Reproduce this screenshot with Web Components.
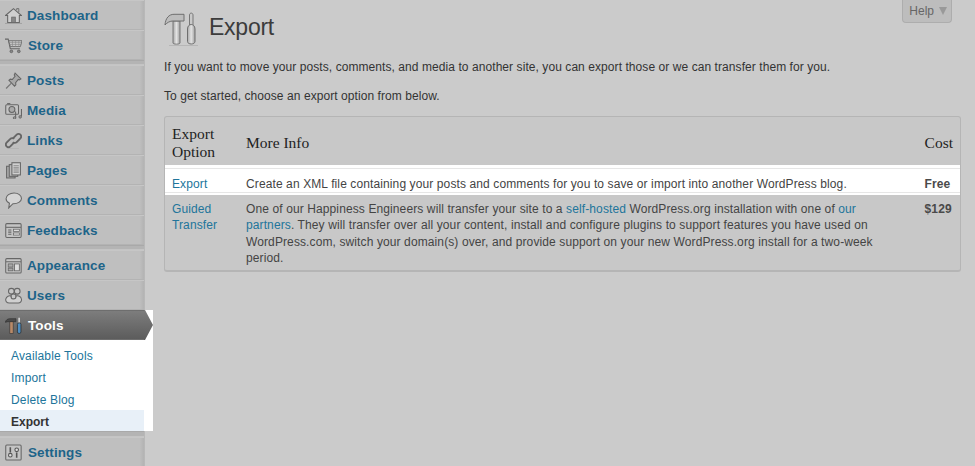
<!DOCTYPE html>
<html>
<head>
<meta charset="utf-8">
<style>
html,body{margin:0;padding:0;height:466px;overflow:hidden;background:#cbcbcb}
body{display:flex;font:12px "Liberation Sans",Arial,sans-serif;color:#333}
</style>
</head>
<body>
<admin-menu>
  <menu-item label="Dashboard"><svg viewBox="0 0 16 16"><path d="M.5 8 8 1.500 15.500 8 13.500 8v6.500h-11V8z" fill="#cfcfcf" stroke="#666"/><path d="M11 3V1.500h2V5" fill="#bbb" stroke="#666" stroke-width=".8"/><rect x="6.300" y="9.500" width="3.400" height="5" fill="#888" stroke="#666" stroke-width=".7"/><path d="M0 15.500h16" stroke="#a3a3a3"/></svg></menu-item>
  <menu-item label="Store" shift="1"><svg viewBox="0 0 16 16"><path d="M0 2h3l2 9h9" fill="none" stroke="#666"/><path d="M3.500 3.500H16l-1.500 5.500H5z" fill="#c8c8c8" stroke="#666" stroke-width=".8"/><path d="M4 5.300h11.500M4.500 7.100h10.500M7 3.500V9M10 3.500V9M13 3.500V9" stroke="#888" stroke-width=".6"/><circle cx="6" cy="13.500" r="1.300" fill="#888" stroke="#555" stroke-width=".6"/><circle cx="13" cy="13.500" r="1.300" fill="#888" stroke="#555" stroke-width=".6"/></svg></menu-item>
  <menu-gap></menu-gap>
  <menu-item label="Posts"><svg viewBox="0 0 16 16"><path d="M9.500 1 15 6.500l-1.500 1-1-.5-2.500 3 .2 2L9 13.300 3.700 7.800 5 6.700l2 .3 2.500-3-.8-1.200z" fill="#a8a8a8" stroke="#666"/><path d="M6 10.500 1 15.500" stroke="#777" stroke-width="1.200"/></svg></menu-item>
  <menu-item label="Media"><svg viewBox="0 0 16 16"><rect x=".7" y="2.500" width="12" height="9" rx="1" fill="#c4c4c4" stroke="#666"/><circle cx="6.500" cy="7" r="2.800" fill="#aaa" stroke="#666"/><path d="M2 1.500h3" stroke="#666"/><path d="M15.500 6.500v7M10 9v6" stroke="#666"/><circle cx="9" cy="15" r="1.200" fill="#999" stroke="#666" stroke-width=".8"/><circle cx="14.300" cy="14" r="1.200" fill="#999" stroke="#666" stroke-width=".8"/></svg></menu-item>
  <menu-item label="Links"><svg viewBox="0 0 16 16" fill="none"><path d="M7.500 6 11 2.500a2.400 2.400 0 0 1 3.500 3.500L11 9.500a2.400 2.400 0 0 1-3.500 0" stroke="#666" stroke-width="1.800"/><path d="M8.500 10 5 13.500A2.400 2.400 0 0 1 1.500 10L5 6.500a2.400 2.400 0 0 1 3.500 0" stroke="#666" stroke-width="1.800"/><path d="M2 16h11" stroke="#aaa"/></svg></menu-item>
  <menu-item label="Pages"><svg viewBox="0 0 16 16"><rect x="1.500" y="4" width="8" height="11" fill="#aaa" stroke="#666"/><rect x="4" y="2.500" width="8" height="11" fill="#bbb" stroke="#666"/><rect x="6.500" y=".7" width="8" height="11.500" fill="#d0d0d0" stroke="#666"/><path d="M8 3.500h5M8 5.500h5M8 7.500h5M8 9.500h5" stroke="#888"/></svg></menu-item>
  <menu-item label="Comments"><svg viewBox="0 0 16 16"><path d="M8.500 1C4.500 1 1 3.300 1 6.300c0 1.800 1.300 3.300 3.200 4.200L3.500 15l4-4c4.200.2 8-1.800 8-4.800S12.500 1 8.500 1z" fill="#d4d4d4" stroke="#666"/></svg></menu-item>
  <menu-item label="Feedbacks"><svg viewBox="0 0 16 16"><rect x=".7" y="1.500" width="14.500" height="13" rx="1" fill="#c4c4c4" stroke="#666"/><path d="M1 5h14" stroke="#666"/><path d="M3 7.500h3M3 9.500h3M3 11.500h3" stroke="#666"/><rect x="8" y="6.800" width="5.500" height="2" fill="#ddd" stroke="#666" stroke-width=".7"/><rect x="8" y="10.300" width="5.500" height="2" fill="#ddd" stroke="#666" stroke-width=".7"/></svg></menu-item>
  <menu-gap></menu-gap>
  <menu-item label="Appearance"><svg viewBox="0 0 16 16"><rect x=".7" y="1.500" width="14.500" height="13.500" rx="1" fill="#c8c8c8" stroke="#666"/><path d="M1 4.500h14" stroke="#666"/><rect x="3" y="6.500" width="4.500" height="3" fill="#aaa" stroke="#666" stroke-width=".8"/><rect x="3" y="10.500" width="4.500" height="2.500" fill="#aaa" stroke="#666" stroke-width=".8"/><rect x="9" y="6.500" width="4.500" height="6.500" fill="#ddd" stroke="#666" stroke-width=".8"/></svg></menu-item>
  <menu-item label="Users"><svg viewBox="0 0 16 16"><circle cx="6" cy="4" r="2.700" fill="#c8c8c8" stroke="#666"/><circle cx="11.500" cy="4" r="2.700" fill="#c8c8c8" stroke="#666"/><circle cx="8" cy="9" r="2.500" fill="#c8c8c8" stroke="#666"/><path d="M.7 11.500C1.500 8.500 4 8 5.500 8.500L6 10.500c.5 1 3 1 4 0L10.500 8.500c2-.5 4.500 0 5 3 .2 2-1 3.500-3 3.500H4c-2.500 0-3.500-1.500-3.300-3.500z" fill="#d0d0d0" stroke="#666"/></svg></menu-item>
  <menu-item label="Tools" current shift="1">
    <svg viewBox="0 0 16 16"><rect x="4.500" y="4" width="3.200" height="11.500" fill="#b98a68" stroke="#3f3f3f" stroke-width=".7"/><path d="M.3 5C.8 2.800 2.500 1.600 4.500 1.600h5.800v2.800H4.300C2.800 4.300 1.500 4.500.3 5z" fill="#4a4a4a" stroke="#2f2f2f" stroke-width=".6"/><path d="M13.300.7v5" stroke="#ddd" stroke-width="1.400"/><rect x="11.700" y="5.500" width="3.300" height="10" rx="1.500" fill="#4e8fc4" stroke="#2b2b2b" stroke-width=".7"/></svg>
    <sub-link slot="sub">Available Tools</sub-link>
    <sub-link slot="sub">Import</sub-link>
    <sub-link slot="sub">Delete Blog</sub-link>
    <sub-link slot="sub" current>Export</sub-link>
  </menu-item>
  <menu-gap tall></menu-gap>
  <menu-item label="Settings" shift="1"><svg viewBox="0 0 16 16"><rect x=".7" y="1" width="14.500" height="14" rx="1" fill="#c4c4c4" stroke="#666"/><path d="M5 3v5M11 8v5" stroke="#555" stroke-width="1.500"/><circle cx="5" cy="10.500" r="1.700" fill="#ddd" stroke="#555"/><circle cx="11" cy="5.500" r="1.700" fill="#ddd" stroke="#555"/></svg></menu-item>
</admin-menu>
<export-page></export-page>

<script>
const hostFont = `font-family:"Liberation Sans",Arial,sans-serif;`

class AdminMenu extends HTMLElement {
    constructor() {
        super()
        this.attachShadow({mode : 'open'}).innerHTML = `
        <style>
        :host{display:flex;flex-direction:column;flex:none;width:145px;height:466px;background:#bdbdbd;border-right:1px solid #b8b8b8;box-sizing:border-box}
        </style>
        <slot></slot>`
    }
}

class MenuItem extends HTMLElement {
    constructor() {
        super()
        this.attachShadow({mode : 'open'})
    }
    connectedCallback(){
        const shift = this.getAttribute('shift') || 0
        this.shadowRoot.innerHTML = `
        <style>
        :host{display:block;position:relative;flex:none;${hostFont}}
        .row{display:flex;align-items:center;height:30px;box-sizing:border-box;padding:0 0 0 5px;border-top:1px solid #c6c6c6;border-bottom:1px solid #b3b3b3;background:linear-gradient(90deg,#bfbfbf 97%,#b3b3b3)}
        .icon{display:block;width:17px;height:17px;flex:none}
        ::slotted(svg){display:block;width:17px;height:17px}
        .label{margin-left:${5 + Number(shift)}px;font-size:13.500px;font-weight:bold;color:#1d6489;letter-spacing:.1px}
        :host([current]) .row{background:linear-gradient(#7d7d7d,#5c5c5c);border-color:#6e6e6e #5c5c5c}
        :host([current]) .label{color:#fff}
        .arrow{position:absolute;left:144px;top:0;width:9px;height:30px;background:#fff}
        .arrow:before{content:"";position:absolute;left:0;top:0;width:9px;height:30px;background:linear-gradient(#7d7d7d,#5c5c5c);clip-path:polygon(0 0,1px 0,100% 50%,1px 100%,0 100%)}
        .sub{display:none}
        :host([current]) .sub{display:block;background:#fff;padding-top:4px;width:144px}
        .strip{position:absolute;left:144px;top:30px;width:9px;height:91px;background:#fff}
        </style>
        <div class="row"><span class="icon"><slot></slot></span><span class="label">${this.getAttribute('label')}</span></div>
        ${this.hasAttribute('current') ? '<div class="arrow"></div><div class="strip"></div>' : ''}
        <div class="sub"><slot name="sub"></slot></div>`
    }
}

class MenuGap extends HTMLElement {
    constructor() {
        super()
        this.attachShadow({mode : 'open'}).innerHTML = `
        <style>
        :host{display:block;height:5px;flex:none;background:#b4b4b4;border-top:1px solid #a9a9a9;border-bottom:1px solid #c4c4c4;box-sizing:border-box}
        :host([tall]){height:6px}
        </style>`
    }
}

class SubLink extends HTMLElement {
    constructor() {
        super()
        this.attachShadow({mode : 'open'}).innerHTML = `
        <style>
        :host{display:block;height:22px;line-height:24px;padding-left:11px;font-size:12px;color:#21759b;letter-spacing:.15px;${hostFont}}
        :host([current]){height:21px;background:#e8f0f8;color:#333;font-weight:bold;letter-spacing:0}
        </style>
        <slot></slot>`
    }
}

class ExportPage extends HTMLElement {
    constructor() {
        super()
        this.attachShadow({mode : 'open'}).innerHTML = `
        <style>
        :host{display:block;position:relative;flex:1;padding:0 14px 0 19px;${hostFont};font-size:12px;color:#333}
        header{display:flex;align-items:center;height:52px;padding-top:3px;box-sizing:border-box}
        header svg{width:36px;height:36px;flex:none}
        h2{margin:0 0 0 9px;font:23px "Liberation Sans",Arial,sans-serif;letter-spacing:-.25px;color:#3c3c3c}
        p{margin:0 0 13.500px;line-height:14px;letter-spacing:.07px}
        .intro{margin:8px 0 14.500px}
        help-tab{position:absolute;top:0;right:23px}
        </style>
        <help-tab></help-tab>
        <header>
            <svg viewBox="0 0 36 36" fill="none">
                <defs><linearGradient id="g" x1="0" x2="1"><stop offset="0" stop-color="#a9a9a9"/><stop offset=".5" stop-color="#e2e2e2"/><stop offset="1" stop-color="#a0a0a0"/></linearGradient></defs>
                <path d="M9 11h7v22c0 1.500-7 1.500-7 0z" fill="url(#g)" stroke="#777"/>
                <path d="M1 15C1.500 8 5 4.300 10 4.300h10v6.700H9C6 11 3 12.500 1 15z" fill="#bdbdbd" stroke="#6e6e6e"/>
                <path d="M25.500 15V5c0-2.500 3.500-2.500 3.500 0v10" fill="#c9c9c9" stroke="#777"/>
                <path d="M23.500 19c0-3 2-4.500 3.700-4.500s3.800 1.500 3.800 4.500v12.500c0 3.300-7.500 3.300-7.500 0z" fill="url(#g)" stroke="#6e6e6e"/>
                <path d="M5 35.500h29" stroke="#b6b6b6"/>
            </svg>
            <h2>Export</h2>
        </header>
        <p class="intro">If you want to move your posts, comments, and media to another site, you can export those or we can transfer them for you.</p>
        <p>To get started, choose an export option from below.</p>
        <option-table></option-table>`
    }
}

class HelpTab extends HTMLElement {
    constructor() {
        super()
        this.attachShadow({mode : 'open'}).innerHTML = `
        <style>
        :host{display:flex;align-items:center;gap:5px;height:23px;box-sizing:border-box;padding:0 4px 0 6px;background:#bdbdbd;border:1px solid #adadad;border-top:0;border-radius:0 0 4px 4px;font-size:12px;color:#666}
        i{width:0;height:0;border-left:4px solid transparent;border-right:4px solid transparent;border-top:8px solid #999}
        </style>
        Help <i></i>`
    }
}

class OptionTable extends HTMLElement {
    constructor() {
        super()
        this.attachShadow({mode : 'open'}).innerHTML = `
        <style>
        :host{display:block;border:1px solid #b5b5b5;border-bottom:2px solid #b5b5b5;border-radius:3px;background:#c8c8c8;overflow:hidden}
        table{border-collapse:collapse;width:100%;font-size:12px}
        th{font:normal 15.500px/18px "Liberation Serif","Times New Roman",serif;color:#222;text-align:left;vertical-align:middle;padding:8px 7px 4px}
        td{padding:0 7px;vertical-align:top;line-height:16.300px;color:#444;letter-spacing:.11px}
        td:nth-child(2){padding-right:32px}
        a{color:#21759b;text-decoration:none}
        .hi td{background:#fff;padding-top:12px;padding-bottom:3px;height:15px;box-shadow:inset 0 3px 0 #fff,inset 0 4px 0 #e6e6e6,inset 0 -2px 0 #fff,inset 0 -3px 0 #e6e6e6;line-height:15px}
        .last td{padding-top:6px;padding-bottom:4px}
        .a{width:60px}
        .c{width:28px}
        b{color:#4a4a4a}
        </style>
        <table>
            <tr><th class="a">Export Option</th><th>More Info</th><th class="c">Cost</th></tr>
            <tr class="hi"><td><a>Export</a></td><td>Create an XML file containing your posts and comments for you to save or import into another WordPress blog.</td><td><b>Free</b></td></tr>
            <tr class="last"><td><a>Guided Transfer</a></td><td>One of our Happiness Engineers will transfer your site to a <a>self-hosted</a> WordPress.org installation with one of <a>our partners</a>. They will transfer over all your content, install and configure plugins to support features you have used on WordPress.com, switch your domain(s) over, and provide support on your new WordPress.org install for a two-week period.</td><td><b>$129</b></td></tr>
        </table>`
    }
}

window.customElements.define('admin-menu',AdminMenu)
window.customElements.define('menu-item',MenuItem)
window.customElements.define('menu-gap',MenuGap)
window.customElements.define('sub-link',SubLink)
window.customElements.define('export-page',ExportPage)
window.customElements.define('help-tab',HelpTab)
window.customElements.define('option-table',OptionTable)
</script>
</body>
</html>
